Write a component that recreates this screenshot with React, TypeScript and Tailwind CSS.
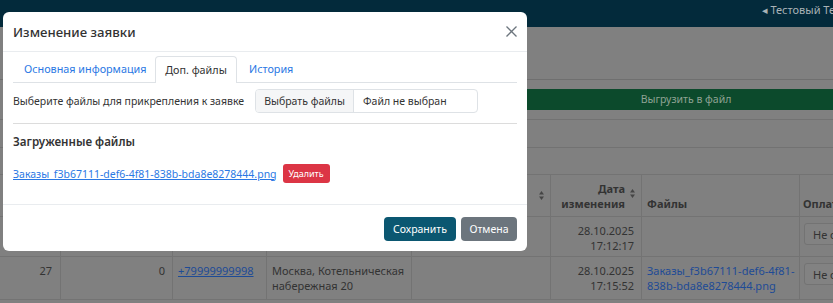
import React from "react";

function SortIcon() {
  return (
    <svg width="5" height="9" viewBox="0 0 5 9" className="self-center shrink-0">
      <path d="M2.5 0 L5 3.5 L0 3.5 Z" fill="#454545" />
      <path d="M2.5 9 L5 5.5 L0 5.5 Z" fill="#454545" />
    </svg>
  );
}

function Select() {
  return (
    <div className="mt-[6px] flex h-[22px] w-[110px] items-center rounded-[3px] border border-[#737373] bg-[#828282] pl-[8px] text-[#333] whitespace-nowrap">
      Не оплачено
    </div>
  );
}

export default function App() {
  const cell = "border-r border-b border-[#737373]";

  return (
    <div className="relative h-[303px] w-[833px] overflow-hidden bg-[#808080] font-['Noto_Sans','DejaVu_Sans',sans-serif] text-[11px] leading-[15px] text-[#333]">
      {/* Страница под затемнением */}
      <div className="flex flex-col">
        <header className="flex h-[27px] items-start justify-end bg-[#032a3b] pt-[2px]">
          <span className="w-[71px] overflow-hidden whitespace-nowrap text-[11px] leading-[16px] text-[#a9b2b6]">
            ◂ Тестовый Тестович
          </span>
        </header>

        <div className="h-[53px] border-b border-[#6f6f6f]" />

        <div className="mt-[9px] flex">
          <div className="w-[400px] shrink-0" />
          <div className="flex h-[21px] w-[572px] shrink-0 items-center justify-center bg-[#0c4a2c] text-[10.5px] text-[#8fa394]">
            Выгрузить в файл
          </div>
        </div>

        <div className="mt-[9px] h-[29px] border-y border-[#727272]" />

        <div className="mt-[26px] grid grid-cols-[61px_112px_94px_145px_139px_91px_158px_120px] border-t border-[#737373]">
          {/* шапка */}
          <div className={`${cell} h-[42px]`} />
          <div className={cell} />
          <div className={cell} />
          <div className={cell} />
          <div className={`${cell} flex justify-end pr-[6px]`}>
            <SortIcon />
          </div>
          <div className={`${cell} flex items-end justify-end gap-[5px] pb-[5px] pr-[6px] font-bold`}>
            <span className="text-right">
              Дата
              <br />
              изменения
            </span>
            <SortIcon />
          </div>
          <div className={`${cell} flex items-end pb-[5px] pl-[5px] font-bold`}>Файлы</div>
          <div className={`${cell} flex items-end pb-[5px] pl-[3px] font-bold`}>Оплата</div>

          {/* строка 1 */}
          <div className={`${cell} h-[40px]`} />
          <div className={cell} />
          <div className={cell} />
          <div className={cell} />
          <div className={cell} />
          <div className={`${cell} pt-[6px] pr-[7px] text-right`}>
            28.10.2025
            <br />
            17:12:17
          </div>
          <div className={cell} />
          <div className={`${cell} pl-[4px]`}>
            <Select />
          </div>

          {/* строка 2 */}
          <div className={`${cell} h-[43px] pt-[6px] pr-[8px] text-right`}>27</div>
          <div className={`${cell} pt-[6px] pr-[7px] text-right`}>0</div>
          <div className={`${cell} pt-[6px] pl-[5px]`}>
            <span className="text-[#1e4b96] underline">+79999999998</span>
          </div>
          <div className={`${cell} pt-[6px] pl-[5px]`}>
            Москва, Котельническая
            <br />
            набережная 20
          </div>
          <div className={cell} />
          <div className={`${cell} pt-[6px] pr-[7px] text-right`}>
            28.10.2025
            <br />
            17:15:52
          </div>
          <div className={`${cell} pt-[6px] pl-[5px] text-[#1e4b96]`}>
            Заказы_f3b67111-def6-4f81-
            <br />
            838b-bda8e8278444.png
          </div>
          <div className={`${cell} pl-[4px]`}>
            <Select />
          </div>
        </div>
      </div>

      {/* Модальное окно */}
      <div className="absolute left-[3px] top-[12px] flex w-[524px] flex-col rounded-[6px] bg-white text-[10.5px] leading-[16px] text-[#212529]">
        <div className="flex h-[40px] items-center justify-between border-b border-[#e9ecef] px-[10px]">
          <h5 className="text-[13.2px] font-medium leading-[20px] text-[#333]">Изменение заявки</h5>
          <svg width="11" height="11" viewBox="0 0 11 11">
            <path d="M0.5 0.5 L10.5 10.5 M10.5 0.5 L0.5 10.5" stroke="#6c757d" strokeWidth="1.3" />
          </svg>
        </div>

        <div className="flex flex-col px-[10px] pt-[4px] pb-[21px]">
          <div className="flex h-[27px] border-b border-[#dee2e6] text-[10.8px]">
            <div className="flex w-[142px] items-center justify-start pl-[11px] text-[#2a78e4]">Основная информация</div>
            <div className="-mb-px flex w-[82px] items-center justify-center rounded-t-[4px] border border-b-0 border-[#dee2e6] bg-white text-[#333]">
              Доп. файлы
            </div>
            <div className="flex items-center px-[12px] text-[#2a78e4]">История</div>
          </div>

          <div className="mt-[6px] flex items-center gap-[10px]">
            <span className="w-[232px] whitespace-nowrap text-[#333]">Выберите файлы для прикрепления к заявке</span>
            <div className="flex h-[24px] w-[223px] overflow-hidden rounded-[4px] border border-[#dee2e6]">
              <div className="flex w-[98px] items-center justify-center border-r border-[#dee2e6] bg-[#f5f6f7] text-[#333]">
                Выбрать файлы
              </div>
              <div className="flex items-center pl-[9px] text-[#333]">Файл не выбран</div>
            </div>
          </div>

          <div className="mt-[10px] border-t border-[#dcdcdc]" />

          <div className="mt-[10px] text-[11.6px] font-semibold text-[#333]">Загруженные файлы</div>

          <div className="mt-[14px] flex items-center gap-[6px]">
            <span className="text-[#2a78e4] underline">Заказы_f3b67111-def6-4f81-838b-bda8e8278444.png</span>
            <button className="flex h-[19px] w-[47px] items-center justify-center rounded-[3px] bg-[#dc3545] text-[9px] text-white">
              Удалить
            </button>
          </div>
        </div>

        <div className="flex justify-end gap-[5px] border-t border-[#e9ecef] px-[10px] pt-[12px] pb-[10px]">
          <button className="h-[24px] w-[72px] rounded-[4px] bg-[#0b5771] text-white">Сохранить</button>
          <button className="h-[24px] w-[56px] rounded-[4px] bg-[#6c757d] text-white">Отмена</button>
        </div>
      </div>
    </div>
  );
}
